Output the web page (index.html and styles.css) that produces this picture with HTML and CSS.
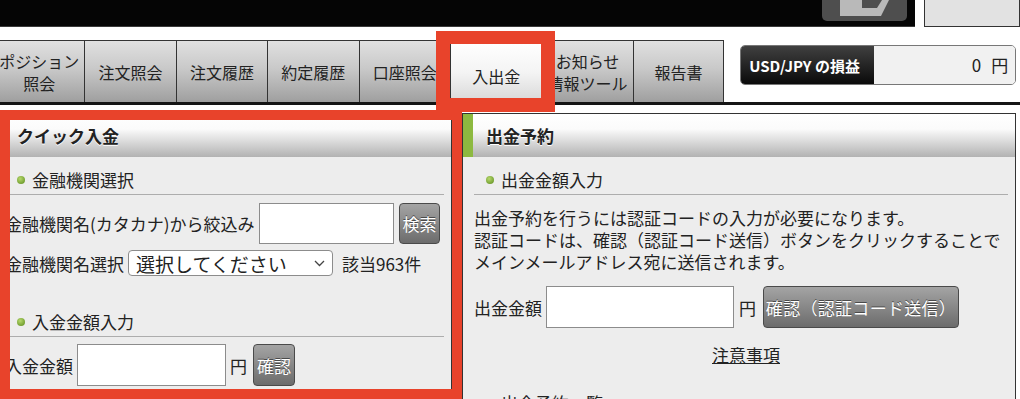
FILE: index.html
```html
<!DOCTYPE html>
<html lang="ja">
<head>
    <meta charset="UTF-8">
    <meta name="viewport" content="width=device-width, initial-scale=1.0">
    <title>入出金</title>
    <link rel="stylesheet" href="styles.css">
</head>
<body>
    <div class="topbar">
        <div class="topbar-dark">
            <div class="logout-button">
                <svg width="85" height="21" viewBox="0 0 85 21">
                    <rect x="18" y="0" width="22" height="16" fill="#b9b9b9"/>
                    <polygon points="40,8 55,8 60,0 67,0 59,16 40,16" fill="#b9b9b9"/>
                </svg>
            </div>
        </div>
        <div class="topbar-box"></div>
    </div>

    <div class="nav">
        <ul class="tabs">
            <li class="tab">ポジション<br>照会</li>
            <li class="tab">注文照会</li>
            <li class="tab">注文履歴</li>
            <li class="tab">約定履歴</li>
            <li class="tab">口座照会</li>
            <li class="tab active">入出金</li>
            <li class="tab">お知らせ<br>情報ツール</li>
            <li class="tab">報告書</li>
        </ul>
        <div class="pl-box">
            <span class="pl-label">USD/JPY の損益</span>
            <span class="pl-value">0<span class="pl-unit">円</span></span>
        </div>
    </div>

    <div class="panels">
        <section class="panel panel-deposit">
            <div class="panel-head">クイック入金</div>
            <div class="panel-body">
                <div class="sub-head"><span class="dot"></span>金融機関選択</div>
                <div class="row row-search">
                    <span>金融機関名(カタカナ)から絞込み</span>
                    <input class="field field-search" type="text">
                    <button class="btn btn-search">検索</button>
                </div>
                <div class="row row-select">
                    <span>金融機関名選択</span>
                    <div class="select">
                        <span>選択してください</span>
                        <svg width="11" height="7" viewBox="0 0 11 7"><polyline points="1,1 5.5,5.5 10,1" fill="none" stroke="#444" stroke-width="1.3"/></svg>
                    </div>
                    <span class="count">該当963件</span>
                </div>
                <div class="sub-head sub-second"><span class="dot"></span>入金金額入力</div>
                <div class="row row-amount">
                    <span>入金金額</span>
                    <input class="field field-deposit" type="text">
                    <span>円</span>
                    <button class="btn btn-confirm">確認</button>
                </div>
            </div>
        </section>

        <section class="panel panel-withdraw">
            <div class="panel-head">出金予約</div>
            <div class="panel-body">
                <div class="sub-head"><span class="dot"></span>出金金額入力</div>
                <p class="note">出金予約を行うには認証コードの入力が必要になります。<br>認証コードは、確認（認証コード送信）ボタンをクリックすることで<br>メインメールアドレス宛に送信されます。</p>
                <div class="row row-withdraw">
                    <span>出金金額</span>
                    <input class="field field-withdraw" type="text">
                    <span class="yen">円</span>
                    <button class="btn btn-send">確認（認証コード送信）</button>
                </div>
                <div class="link-row"><a href="#">注意事項</a></div>
                <div class="sub-head sub-list"><span class="dot"></span>出金予約一覧</div>
            </div>
        </section>
    </div>

    <!-- red highlight marks -->
    <div class="mark mark-tab"></div>
    <div class="mark mark-panel"></div>
</body>
</html>
```

FILE: styles.css
```css
body {
    margin: 0;
    width: 1020px;
    height: 399px;
    overflow: hidden;
    position: relative;
    background-color: #fff;
    color: #222;
    font-family: "Noto Sans CJK JP", "Noto Sans", sans-serif;
    font-size: 17px;
}
.topbar {
    display: flex;
    height: 27px;
}
.topbar-dark {
    width: 915px;
    background-color: #050505;
    border-bottom: 1px solid #3a3a3a;
    box-sizing: border-box;
    display: flex;
    justify-content: flex-end;
    padding-right: 8px;
}
.logout-button {
    width: 85px;
    height: 21px;
    background-color: #4e4e4e;
    border-radius: 0 0 5px 5px;
}
.logout-button svg {
    display: block;
}
.topbar-box {
    flex: 1;
    margin-left: 9px;
    background-color: #e2e2e2;
    border: 1px solid #333;
    border-top: none;
}
.nav {
    display: flex;
    height: 62px;
    margin: 13px 0 0 -7px;
    border-bottom: 3px solid #151515;
}
.tabs {
    display: flex;
    list-style: none;
    margin: 0;
    padding: 0;
}
.tab {
    width: 91.4px;
    box-sizing: border-box;
    border: 1px solid #333;
    border-right: none;
    border-bottom: none;
    background: linear-gradient(#e0e0e0, #c9c9c9 45%, #9f9f9f);
    display: flex;
    align-items: center;
    justify-content: center;
    text-align: center;
    font-size: 16px;
    line-height: 22px;
    white-space: nowrap;
}
.tab:last-child {
    border-right: 1px solid #333;
}
.tab.active {
    background: linear-gradient(#fff, #f4f4f4 50%, #d8d8d8);
    border-top: 2px solid #8db940;
    padding-top: 8px;
}
.pl-box {
    display: flex;
    width: 276px;
    height: 40px;
    margin: 5px 0 0 16px;
    box-sizing: border-box;
    border: 1px solid #777;
    border-radius: 5px;
    overflow: hidden;
}
.pl-label {
    width: 133px;
    padding-left: 8px;
    box-sizing: border-box;
    background: linear-gradient(#404040, #0a0a0a);
    color: #fff;
    font-weight: bold;
    font-size: 15px;
    display: flex;
    align-items: center;
    white-space: nowrap;
}
.pl-value {
    flex: 1;
    background-color: #f1f1f1;
    text-align: right;
    padding-right: 7px;
    line-height: 38px;
}
.pl-unit {
    margin-left: 10px;
}
.panels {
    display: flex;
    gap: 10px;
    margin: 8px 0 0 -7px;
}
.panel {
    height: 300px;
    box-sizing: border-box;
    border: 1px solid #333;
    background-color: #ededed;
    overflow: hidden;
}
.panel-deposit {
    width: 459px;
}
.panel-withdraw {
    width: 554px;
}
.panel-head {
    height: 43px;
    border-left: 10px solid #8db940;
    padding-left: 13px;
    background: linear-gradient(#fff, #fbfbfb 35%, #b2b2b2);
    font-weight: bold;
    display: flex;
    align-items: center;
    text-shadow: 0 1px 0 #fff;
}
.panel-body {
    padding: 0 7px 0 11px;
}
.sub-head {
    display: flex;
    align-items: center;
    gap: 7px;
    padding: 14px 0 5px 12px;
    line-height: 18px;
    border-bottom: 1px solid #adadad;
}
.dot {
    width: 8px;
    height: 8px;
    border-radius: 50%;
    background: radial-gradient(circle at 40% 35%, #b6d86c, #5a8a1c);
}
.row {
    display: flex;
    align-items: center;
    gap: 4px;
    white-space: nowrap;
}
.field {
    height: 42px;
    box-sizing: border-box;
    border: 1px solid #8c8c8c;
    background-color: #fff;
    margin: 0;
}
.btn {
    height: 42px;
    box-sizing: border-box;
    padding: 0 3px;
    border: 1px solid #4a4a4a;
    border-radius: 4px;
    background: linear-gradient(#a4a4a4, #6c6c6c);
    color: #fff;
    font-family: inherit;
    font-size: 17px;
    text-shadow: 0 -1px 0 #4a4a4a;
    white-space: nowrap;
}
.row-search {
    margin-top: 8px;
}
.field-search {
    width: 135px;
    height: 41px;
}
.btn-search {
    width: 41px;
    height: 41px;
    margin-left: 1px;
}
.row-select {
    margin-top: 6px;
}
.select {
    width: 205px;
    height: 26px;
    box-sizing: border-box;
    border: 1px solid #8c8c8c;
    border-radius: 4px;
    background-color: #fff;
    padding: 0 7px;
    display: flex;
    align-items: center;
    justify-content: space-between;
    font-size: 19px;
}
.count {
    margin-left: 5px;
}
.sub-second {
    margin-top: 23px;
}
.row-amount {
    margin-top: 7px;
}
.field-deposit {
    width: 149px;
}
.btn-confirm {
    width: 42px;
    margin-left: 2px;
}
.note {
    margin: 12px 0 0;
    line-height: 22px;
}
.row-withdraw {
    margin-top: 13px;
}
.field-withdraw {
    width: 188px;
}
.yen {
    margin-left: 1px;
}
.btn-send {
    width: 196px;
    margin-left: 3px;
    padding: 0 1px;
    letter-spacing: 0.3px;
}
.link-row {
    margin-top: 16px;
    padding-left: 10px;
    text-align: center;
    line-height: 22px;
}
.link-row a {
    color: #222;
}
.sub-list {
    margin-top: 14px;
    border-bottom: none;
}
.mark {
    position: absolute;
    box-sizing: border-box;
    border: 14px solid #e8432b;
}
.mark-tab {
    left: 436px;
    top: 31px;
    width: 119px;
    height: 81px;
    border-top-width: 13px;
}
.mark-panel {
    left: 0;
    top: 110px;
    width: 462px;
    height: 289px;
    border-width: 10px;
}
```
